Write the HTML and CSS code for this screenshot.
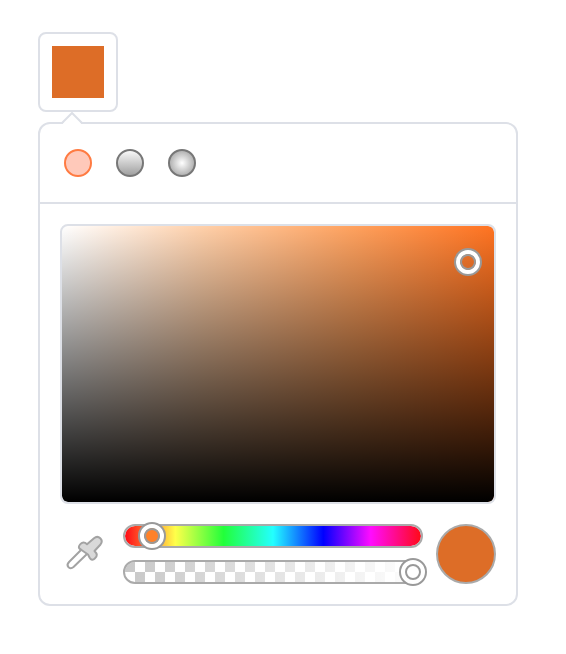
FILE: index.html
```html
<!DOCTYPE html>
<html lang="en">
<head>
<meta charset="utf-8">
<title>Color picker</title>
<link rel="stylesheet" href="styles.css">
</head>
<body>
<div class="swatch"><div class="swatch-color"></div></div>
<div class="panel">
  <svg class="arrow" width="24" height="14" viewBox="0 0 24 14"><path d="M1 13H2.500L12 2L21.500 13H23V14H1Z" fill="#fff"/><path d="M0 12H2L12 2L22 12H24" fill="none" stroke="#dde0e7" stroke-width="2"/></svg>
  <div class="modes">
    <div class="mode solid"></div>
    <div class="mode linear"></div>
    <div class="mode radial"></div>
  </div>
  <div class="content">
    <div class="area"><div class="handle area-handle"></div></div>
    <div class="controls">
      <svg class="dropper" width="48" height="48" viewBox="0 0 48 48" stroke="#a3a3a3" stroke-width="2" stroke-linejoin="round">
        <path d="M22.500 18.500L9 32C5.500 35.500 9.500 40.500 13.500 37L28 23Z" fill="#fff"/>
        <path d="M20 14.500C22 12 24.500 11.800 27 14.200L34 8.200C38.500 4.500 44 10 40.500 14.500L34.500 21C37.500 24 37.500 26 35 28.300C33 30.500 31 30.200 29.500 27.500L28 24.500L21.500 20C18.500 18.500 18 17 20 14.500Z" fill="#d9d9d9"/>
      </svg>
      <div class="sliders">
        <div class="track hue"><div class="handle hue-handle"></div></div>
        <div class="track alpha"><div class="handle alpha-handle"></div></div>
      </div>
      <div class="preview"></div>
    </div>
  </div>
</div>
</body>
</html>
```
FILE: styles.css
```css
* { box-sizing: border-box; }
body { margin: 0; padding: 32px 38px; background: #fff; }
.swatch { width: 80px; height: 80px; padding: 12px; border: 2px solid #dde0e7; border-radius: 8px; }
.swatch-color { width: 52px; height: 52px; background: #dd6d27; }
.panel { position: relative; width: 480px; height: 484px; margin-top: 10px; border: 2px solid #dde0e7; border-radius: 12px; background: #fff; }
.arrow { position: absolute; left: 20px; top: -13px; }
.modes { display: flex; align-items: center; gap: 24px; height: 80px; padding: 0 24px; border-bottom: 2px solid #dde0e7; }
.mode { width: 28px; height: 28px; border: 2px solid #777; border-radius: 50%; }
.solid { border-color: #ff7b42; background: #ffc9ba; }
.linear { background: linear-gradient(#fff, #999) border-box; }
.radial { background: radial-gradient(closest-side, #fff, #b3b3b3); }
.content { padding: 20px; }
.area {
  position: relative; height: 280px; border: 2px solid #dde0e7; border-radius: 8px;
  background: linear-gradient(to top, #000, transparent) padding-box, linear-gradient(to right, #fff, #ffcfa8 33%, #ffa25f 67%, #ff7321) padding-box;
}
.handle { position: absolute; width: 28px; height: 28px; border: 2px solid #999; border-radius: 50%; background: radial-gradient(circle, transparent 7.500px, #fff 8px); }
.handle::after { content: ""; position: absolute; inset: 4px; border: 2px solid #999; border-radius: 50%; }
.area-handle { left: 392px; top: 22px; }
.controls { display: flex; height: 60px; margin-top: 20px; }
.dropper { margin-top: 6px; }
.sliders { display: flex; flex-direction: column; gap: 12px; width: 300px; margin: 0 13px 0 15px; }
.track { position: relative; height: 24px; border: 2px solid #aaa; border-radius: 12px; }
.hue { background: linear-gradient(to right, #ff0a17, #ffff4a 17%, #22ff3a 33.300%, #23ffff 50%, #0000ff 67%, #ff0cff 83%, #ff0a17) padding-box; }
.hue-handle { left: 13px; top: -4px; }
.hue-handle::after { background: #ff8128; }
.alpha { background: linear-gradient(to right, rgba(255,255,255,0), #fff) padding-box, repeating-conic-gradient(#fff 0 25%, #c8c8c8 0 50%) 0 0 / 20px 20px padding-box; }
.alpha-handle { left: 274px; top: -4px; background: #fff; }
.preview { width: 60px; height: 60px; border: 2px solid #aaa; border-radius: 50%; background: #dd6d27; }
```
